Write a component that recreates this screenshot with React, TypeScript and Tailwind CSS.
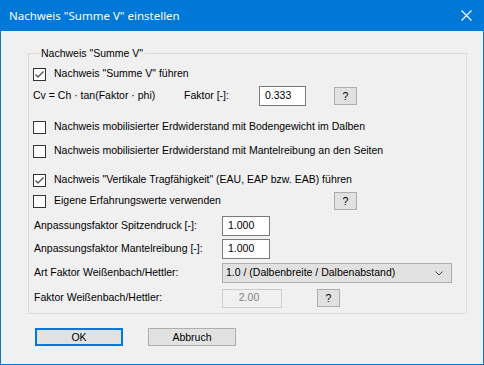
import React from 'react'

const font = { fontFamily: '"Liberation Sans", Arial, sans-serif' }

const CheckBox = ({ checked }: { checked?: boolean }) => (
  <span className="w-[13px] h-[13px] border border-[#333333] bg-white flex items-center justify-center shrink-0">
    {checked && (
      <svg width="11" height="11" viewBox="0 0 11 11">
        <polyline points="1.5,5.5 4,8 9.5,2.5" fill="none" stroke="#555555" strokeWidth="1.4" />
      </svg>
    )}
  </span>
)

const Check = ({ checked, label }: { checked?: boolean; label: string }) => (
  <label className="flex items-center gap-[8px]">
    <CheckBox checked={checked} />
    <span>{label}</span>
  </label>
)

const HelpButton = () => (
  <button className="w-[23px] h-[18px] border border-[#adadad] bg-[#e1e1e1] flex items-center justify-center leading-none">
    ?
  </button>
)

const TextBox = ({ value, width }: { value: string; width: string }) => (
  <div className={`${width} h-[20px] border border-[#7a7a7a] bg-white flex items-center pl-[5px]`}>{value}</div>
)

export default function App() {
  return (
    <div
      className="w-[484px] h-[365px] flex flex-col bg-[#f0f0f0] border-x border-b border-[#0078d7] text-[10.5px] text-black"
      style={font}
    >
      {/* Title bar */}
      <div className="h-[31px] bg-[#0078d7] flex items-center justify-between pl-[8px] pr-[11px] shrink-0">
        <span className="text-white text-[11.5px]" style={{ fontFamily: '"Noto Sans", sans-serif' }}>
          Nachweis "Summe V" einstellen
        </span>
        <svg width="11" height="11" viewBox="0 0 11 11">
          <path d="M0.5 0.5 L10.5 10.5 M10.5 0.5 L0.5 10.5" stroke="white" strokeWidth="1.1" />
        </svg>
      </div>

      <div className="pl-[27px] pt-[22px]">
        {/* Group box */}
        <div className="relative w-[439px] h-[261px] border border-[#dcdcdc] pl-[4px] pt-[10px]">
          <span className="absolute top-[-8px] left-[10px] px-[2px] bg-[#f0f0f0]">Nachweis "Summe V"</span>

          <div className="h-[20px] flex items-center">
            <Check checked label={'Nachweis "Summe V" führen'} />
          </div>

          <div className="h-[20px] mt-[2px] flex items-center">
            <span className="w-[151px]">Cv = Ch · tan(Faktor · phi)</span>
            <span className="w-[75px]">Faktor [-]:</span>
            <TextBox value="0.333" width="w-[47px]" />
            <div className="ml-[28px]">
              <HelpButton />
            </div>
          </div>

          <div className="h-[20px] mt-[11px] flex items-center">
            <Check label="Nachweis mobilisierter Erdwiderstand mit Bodengewicht im Dalben" />
          </div>
          <div className="h-[20px] mt-[4px] flex items-center">
            <Check label="Nachweis mobilisierter Erdwiderstand mit Mantelreibung an den Seiten" />
          </div>

          <div className="h-[20px] mt-[9px] flex items-center">
            <Check checked label={'Nachweis "Vertikale Tragfähigkeit" (EAU, EAP bzw. EAB) führen'} />
          </div>
          <div className="h-[20px] mt-[1px] flex items-center">
            <div className="w-[301px]">
              <Check label="Eigene Erfahrungswerte verwenden" />
            </div>
            <HelpButton />
          </div>

          <div className="h-[20px] mt-[5px] flex items-center">
            <span className="w-[189px] pl-[1px]">Anpassungsfaktor Spitzendruck [-]:</span>
            <TextBox value="1.000" width="w-[48px]" />
          </div>
          <div className="h-[20px] mt-[3px] flex items-center">
            <span className="w-[189px] pl-[1px]">Anpassungsfaktor Mantelreibung [-]:</span>
            <TextBox value="1.000" width="w-[48px]" />
          </div>

          <div className="h-[20px] mt-[4px] flex items-center">
            <span className="w-[189px] pl-[1px]">Art Faktor Weißenbach/Hettler:</span>
            <div className="w-[230px] h-[20px] border border-[#adadad] bg-[#e1e1e1] flex items-center justify-between pl-[3px] pr-[8px]">
              <span>1.0 / (Dalbenbreite / Dalbenabstand)</span>
              <svg width="8" height="5" viewBox="0 0 8 5">
                <polyline points="0.5,0.5 4,4 7.5,0.5" fill="none" stroke="#444444" strokeWidth="1" />
              </svg>
            </div>
          </div>

          <div className="h-[20px] mt-[5px] flex items-center">
            <span className="w-[189px] pl-[1px]">Faktor Weißenbach/Hettler:</span>
            <div className="w-[60px] h-[19px] border border-[#cccccc] bg-[#f0f0f0] flex items-center justify-center pr-[6px] text-[#838383]">
              2.00
            </div>
            <div className="ml-[35px]">
              <HelpButton />
            </div>
          </div>
        </div>

        {/* Buttons */}
        <div className="flex gap-[25px] mt-[14px] ml-[7px]">
          <button className="w-[88px] h-[18px] border-2 border-[#0078d7] bg-[#e1e1e1] flex items-center justify-center leading-none">
            OK
          </button>
          <button className="w-[88px] h-[18px] border border-[#adadad] bg-[#e1e1e1] flex items-center justify-center leading-none">
            Abbruch
          </button>
        </div>
      </div>
    </div>
  )
}
